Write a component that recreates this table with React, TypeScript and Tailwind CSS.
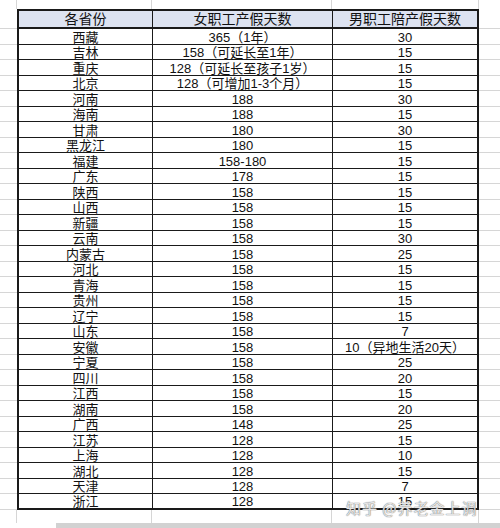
import React from "react";

const rows: [string, string, string][] = [
  ["西藏", "365（1年）", "30"],
  ["吉林", "158（可延长至1年）", "15"],
  ["重庆", "128（可延长至孩子1岁）", "15"],
  ["北京", "128（可增加1-3个月）", "15"],
  ["河南", "188", "30"],
  ["海南", "188", "15"],
  ["甘肃", "180", "30"],
  ["黑龙江", "180", "15"],
  ["福建", "158-180", "15"],
  ["广东", "178", "15"],
  ["陕西", "158", "15"],
  ["山西", "158", "15"],
  ["新疆", "158", "15"],
  ["云南", "158", "30"],
  ["内蒙古", "158", "25"],
  ["河北", "158", "15"],
  ["青海", "158", "15"],
  ["贵州", "158", "15"],
  ["辽宁", "158", "15"],
  ["山东", "158", "7"],
  ["安徽", "158", "10（异地生活20天）"],
  ["宁夏", "158", "25"],
  ["四川", "158", "20"],
  ["江西", "158", "15"],
  ["湖南", "158", "20"],
  ["广西", "148", "25"],
  ["江苏", "128", "15"],
  ["上海", "128", "10"],
  ["湖北", "128", "15"],
  ["天津", "128", "7"],
  ["浙江", "128", "15"],
];

export default function App() {
  return (
    <div className="relative w-[500px] h-[528px] overflow-hidden bg-white text-[#111] font-['Liberation_Sans','Noto_Sans_CJK_SC',sans-serif] flex flex-col">
      {/* top strip with faint gridlines */}
      <div className="h-[9px] flex shrink-0">
        <div className="w-[17px] border-r border-[#d6d6d6]" />
        <div className="w-[135px] border-r border-[#d6d6d6]" />
        <div className="w-[180px] border-r border-[#d6d6d6]" />
        <div className="w-[147px] border-r border-[#d6d6d6]" />
        <div className="flex-1" />
      </div>

      {/* header */}
      <div className="h-[20px] flex shrink-0">
        <div className="w-[17px] border-b border-[#d6d6d6]" />
        <div className="w-[135px] bg-[#dde3f1] border-t-2 border-l-2 border-b-2 border-[#1a1a1a] flex items-end justify-center text-[14px] leading-[16px]">
          各省份
        </div>
        <div className="w-[180px] bg-[#dde3f1] border-t-2 border-l border-b-2 border-[#1a1a1a] flex items-end justify-center text-[14px] leading-[16px]">
          女职工产假天数
        </div>
        <div className="w-[147px] bg-[#dde3f1] border-t-2 border-l border-r-2 border-b-2 border-[#1a1a1a] flex items-end justify-center text-[14px] leading-[16px]">
          男职工陪产假天数
        </div>
        <div className="flex-1 border-b border-[#d6d6d6]" />
      </div>

      {rows.map(([p, f, m], i) => {
        const last = i === rows.length - 1;
        return (
          <div key={i} className="h-[15.5px] flex shrink-0">
            <div className="w-[17px] border-b border-[#d6d6d6]" />
            <div
              className={
                "w-[135px] border-l-2 border-[#1a1a1a] flex items-end justify-center text-[13px] leading-[13px] " +
                (last ? "border-b-2" : "border-b")
              }
            >
              {p}
            </div>
            <div
              className={
                "w-[180px] border-l border-[#1a1a1a] flex items-end justify-center text-[13px] leading-[13px] " +
                (last ? "border-b-2" : "border-b")
              }
            >
              {f}
            </div>
            <div
              className={
                "w-[147px] border-l border-r-2 border-[#1a1a1a] flex items-end justify-center text-[13px] leading-[13px] " +
                (last ? "border-b-2" : "border-b")
              }
            >
              {m}
            </div>
            <div className="flex-1 border-b border-[#d6d6d6]" />
          </div>
        );
      })}

      {/* bottom strip */}
      <div className="flex-1 flex flex-col">
        <div className="flex-1 flex">
          <div className="w-[17px] border-r border-[#d6d6d6]" />
          <div className="w-[135px] border-r border-[#d6d6d6]" />
          <div className="w-[180px] border-r border-[#d6d6d6]" />
          <div className="w-[147px] border-r border-[#d6d6d6]" />
          <div className="flex-1" />
        </div>
        <div className="h-[5px] ml-[56px] bg-[#d2d2d2]" />
      </div>

      {/* watermark */}
      <div className="absolute left-[346px] top-[499px] text-[15px] leading-[18px] tracking-[1px] text-white/80 font-['Noto_Sans_CJK_SC',sans-serif] [text-shadow:0_0_1px_#777,0_0_1px_#777]">
        知乎 @养老金上调
      </div>
    </div>
  );
}
